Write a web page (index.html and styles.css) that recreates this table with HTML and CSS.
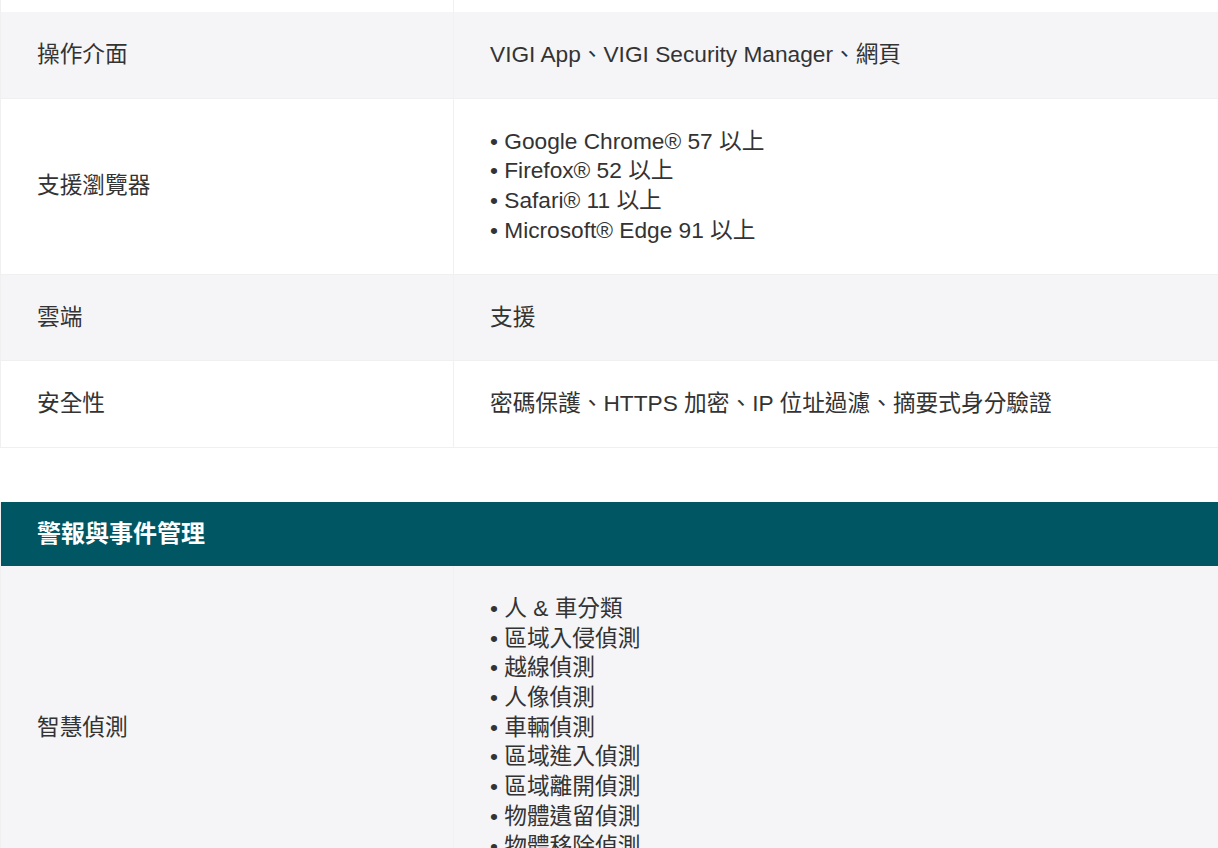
FILE: index.html
```html
<!DOCTYPE html>
<html lang="zh-Hant">
<head>
<meta charset="utf-8">
<title>規格</title>
<link rel="stylesheet" href="styles.css">
</head>
<body>
<div class="spec">
  <div class="row row-cut"><div class="key"></div><div class="val"></div></div>
  <div class="row alt"><div class="key">操作介面</div><div class="val">VIGI App、VIGI Security Manager、網頁</div></div>
  <div class="row"><div class="key">支援瀏覽器</div><div class="val">
    <ul class="bullets">
      <li>Google Chrome® 57 以上</li>
      <li>Firefox® 52 以上</li>
      <li>Safari® 11 以上</li>
      <li>Microsoft® Edge 91 以上</li>
    </ul>
  </div></div>
  <div class="row alt"><div class="key">雲端</div><div class="val">支援</div></div>
  <div class="row"><div class="key">安全性</div><div class="val">密碼保護、HTTPS 加密、IP 位址過濾、摘要式身分驗證</div></div>
</div>

<div class="spec section">
  <div class="section-head">警報與事件管理</div>
  <div class="row alt"><div class="key">智慧偵測</div><div class="val">
    <ul class="bullets">
      <li>人 &amp; 車分類</li>
      <li>區域入侵偵測</li>
      <li>越線偵測</li>
      <li>人像偵測</li>
      <li>車輛偵測</li>
      <li>區域進入偵測</li>
      <li>區域離開偵測</li>
      <li>物體遺留偵測</li>
      <li>物體移除偵測</li>
    </ul>
  </div></div>
</div>
</body>
</html>
```

FILE: styles.css
```css
html, body {
  margin: 0;
  padding: 0;
  background: #ffffff;
}
body {
  font-family: "Liberation Sans", "Noto Sans CJK TC", Arial, sans-serif;
  font-size: 22.7px;
  line-height: 29.7px;
  color: #333333;
}
.spec {
  border-left: 1px solid #f0f0f0;
}
.row {
  display: grid;
  grid-template-columns: 452px 1fr;
  border-bottom: 1px solid #f0f0f0;
  background: #ffffff;
}
.row.alt {
  background: #f5f5f7;
}
.row-cut {
  height: 12px;
  border-bottom: none;
}
.key, .val {
  display: flex;
  align-items: center;
  padding: 28px 36px;
}
.row-cut .key, .row-cut .val {
  padding: 0;
}
.val {
  border-left: 1px solid #f1f1f1;
}
.bullets {
  list-style: none;
  margin: 0;
  padding: 0;
}
.bullets li::before {
  content: "• ";
}
.section {
  margin-top: 54px;
}
.section-head {
  background: #005663;
  color: #ffffff;
  font-weight: bold;
  font-size: 24px;
  height: 64px;
  display: flex;
  align-items: center;
  padding: 0 36px;
}
```
